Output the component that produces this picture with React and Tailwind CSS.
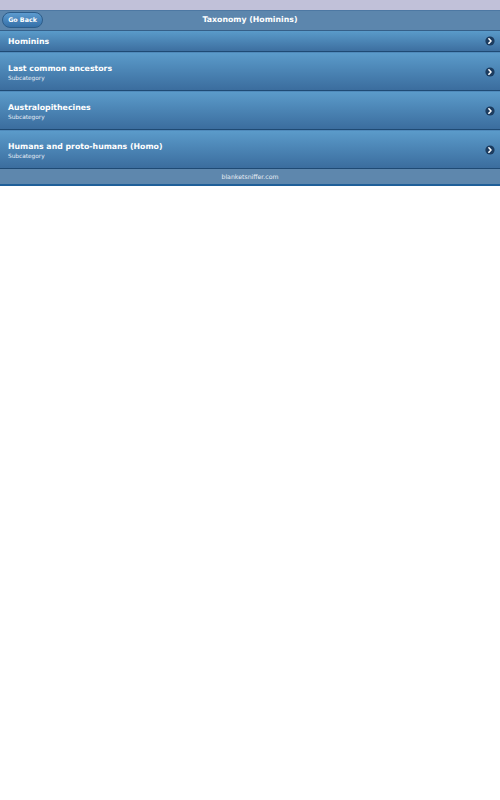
import React from "react";

const rows = [
  { title: "Last common ancestors", sub: "Subcategory" },
  { title: "Australopithecines", sub: "Subcategory" },
  { title: "Humans and proto-humans (Homo)", sub: "Subcategory" },
];

function Arrow() {
  return (
    <svg width="10" height="10" viewBox="0 0 10 10" className="shrink-0">
      <circle cx="5" cy="5" r="4.6" fill="#1c3b5e" />
      <path d="M3.9 2.8 L6 5 L3.9 7.2" stroke="#fff" strokeWidth="1.6" fill="none" strokeLinecap="round" strokeLinejoin="round" />
    </svg>
  );
}

export default function App() {
  return (
    <div className="w-[500px] bg-white font-['DejaVu_Sans',sans-serif] text-white">
      <div className="h-[10px] bg-[#c1c1d9]" />
      <div className="relative flex h-[21px] items-center justify-center border-t border-[#4d78a3] border-b border-b-[#355f88] bg-[#5c86ad]">
        <button className="absolute left-[2px] top-[1px] flex h-[16px] w-[41px] items-center justify-center rounded-full border border-[#2d5d8a] bg-gradient-to-b from-[#5d9bcf] to-[#3570a8] pb-[1px] text-[6.3px] font-bold text-white">
          Go Back
        </button>
        <span className="pb-[1px] text-[7.8px] font-bold leading-none">Taxonomy (Hominins)</span>
      </div>
      <div className="flex h-[21px] items-center justify-between border-b border-[#1f4a74] bg-gradient-to-b from-[#5a9bca] to-[#3d6fa0] pl-[8px] pr-[5px]">
        <span className="pt-[2px] text-[7.8px] font-bold leading-none">Hominins</span>
        <Arrow />
      </div>
      {rows.map((r) => (
        <div
          key={r.title}
          className="flex h-[39px] items-center justify-between border-t border-[#4f8abb] border-b border-b-[#1f4a74] bg-gradient-to-b from-[#5b9bca] to-[#3b6d9e] pl-[8px] pr-[5px]"
        >
          <div className="flex flex-col pt-[4px]">
            <span className="text-[7.8px] font-bold leading-[10px]">{r.title}</span>
            <span className="text-[5.8px] leading-[9px] text-[#e6eef7]">{r.sub}</span>
          </div>
          <Arrow />
        </div>
      ))}
      <div className="flex h-[17px] items-center justify-center border-b-2 border-[#1f5f99] bg-[#5e87ad]">
        <span className="pt-[1px] text-[6.2px] leading-none text-[#e8eef5]">blanketsniffer.com</span>
      </div>
    </div>
  );
}
